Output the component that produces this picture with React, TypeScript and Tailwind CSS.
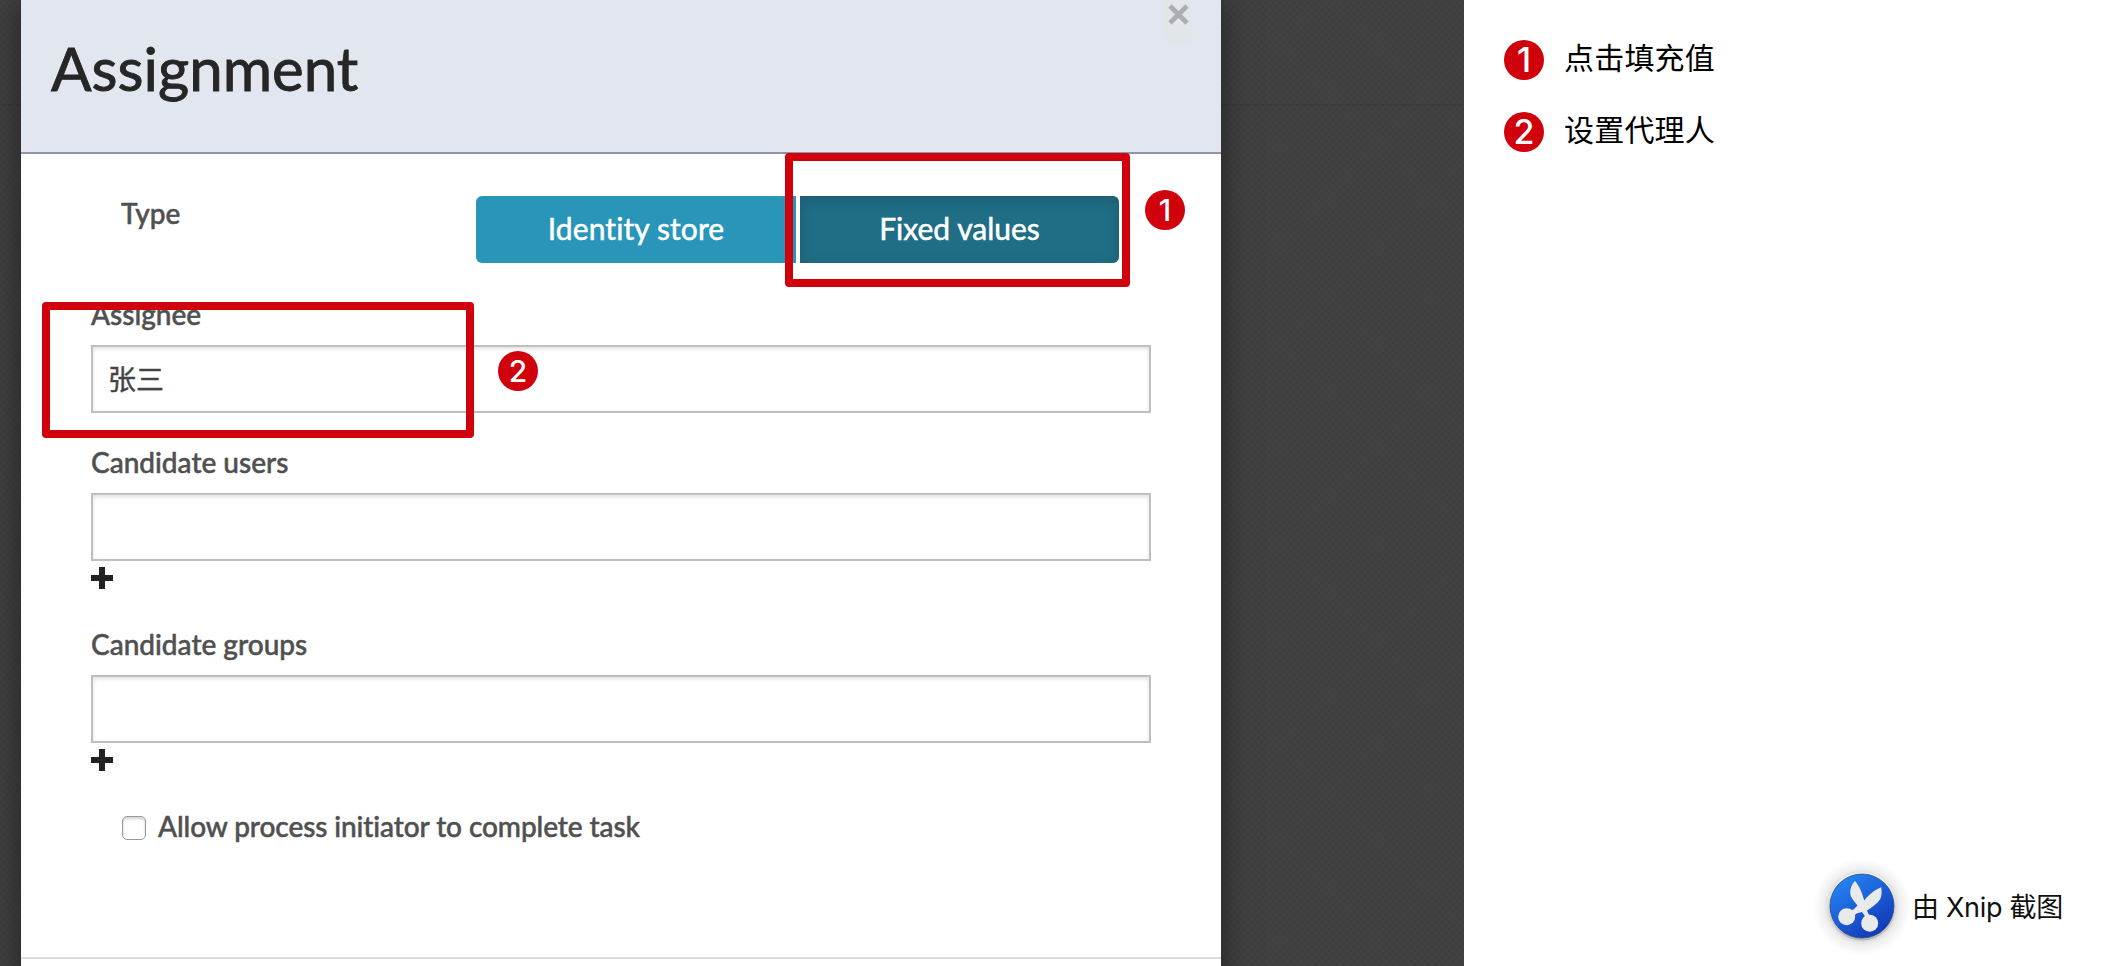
import type { ReactNode } from "react";

const LATO = "font-['Lato','Noto_Sans_CJK_SC',sans-serif]";
const LABEL = "text-[28px] font-medium leading-[34px] text-[#505050] [-webkit-text-stroke:0.5px_#505050]";

function Badge({ n, className = "" }: { n: number; className?: string }) {
  return (
    <span
      className={`flex size-10 shrink-0 items-center justify-center rounded-full bg-[#d0000d] font-['Inter',sans-serif] font-medium leading-none text-white ${className}`}
    >
      {n}
    </span>
  );
}

function Plus() {
  return (
    <svg className="mt-1.5 block size-[22px]" viewBox="0 0 22 22" fill="#222" shapeRendering="crispEdges">
      <path d="M8 0h6v8h8v6h-8v8H8v-8H0V8h8z" />
    </svg>
  );
}

function Field({ label, children, addable }: { label: string; children?: ReactNode; addable?: boolean }) {
  return (
    <div>
      <div className={`h-12 ${LABEL}`}>{label}</div>
      <div className="flex h-[68px] items-center border-2 border-[#bfbfbf] bg-white px-[15px] text-[28px] leading-none text-[#444] shadow-[inset_0_2px_4px_rgba(0,0,0,0.12)] [-webkit-text-stroke:0.4px_#444]">
        {children}
      </div>
      {addable && <Plus />}
    </div>
  );
}

function XnipIcon() {
  return (
    <svg className="block size-[100px] shrink-0" viewBox="0 0 100 100">
      <defs>
        <radialGradient id="halo">
          <stop offset="0.6" stopColor="#000" stopOpacity="0.2" />
          <stop offset="0.78" stopColor="#000" stopOpacity="0.06" />
          <stop offset="1" stopColor="#000" stopOpacity="0" />
        </radialGradient>
        <linearGradient id="rim" x1="0" y1="0" x2="0" y2="1">
          <stop offset="0" stopColor="#fafafa" />
          <stop offset="1" stopColor="#b4b6ba" />
        </linearGradient>
        <linearGradient id="disc" x1="0.15" y1="0.1" x2="0.75" y2="0.95">
          <stop offset="0" stopColor="#2583f2" />
          <stop offset="1" stopColor="#1239b8" />
        </linearGradient>
      </defs>
      <circle cx="50" cy="51" r="49" fill="url(#halo)" />
      <circle cx="50" cy="50.5" r="34" fill="url(#rim)" />
      <circle cx="50" cy="50" r="32" fill="url(#disc)" stroke="#2a4a86" strokeWidth="0.8" />
      <g fill="#e9eaec">
        <path d="M43 25C38.500 29 37 36.500 39.500 41.500C41 44.500 43.500 46.500 45.500 49.500L41.500 53.500L37 54.500L41.500 60.500L44.500 57.500L50 56L52.500 59.500L53 62.500L59.500 60.500L56.500 58L55 54.500C59.500 51.500 65 48 68 43.500C70 40 69.700 36 69.300 31.300C63 33.500 57 38.500 52.200 44.500C50.500 37.500 47 29.500 43 25Z" />
        <circle cx="34.700" cy="60.700" r="8.500" />
        <circle cx="57.700" cy="67.300" r="8.500" />
      </g>
    </svg>
  );
}

export default function App() {
  return (
    <div className={`relative flex h-[966px] w-[2104px] overflow-hidden bg-white [font-variant-ligatures:none] ${LATO}`}>
      <div className="w-[1464px] shrink-0 overflow-hidden bg-[#424242] bg-[repeating-linear-gradient(45deg,rgba(0,0,0,0.03)_0_2px,transparent_2px_5px),repeating-linear-gradient(-45deg,rgba(0,0,0,0.03)_0_2px,transparent_2px_5px),linear-gradient(transparent_104px,rgba(0,0,0,0.08)_104px,rgba(0,0,0,0.08)_106px,transparent_106px)] pl-[21px]">
        <div className="flex h-[1000px] w-[1200px] flex-col bg-white shadow-[0_0_30px_rgba(0,0,0,0.5)]">
          <header className="flex h-[154px] items-start justify-between border-b-2 border-[#8f96a9] bg-[#e2e6ee] pl-[30px] pr-7">
            <h1 className="mt-8 text-[60px] leading-[72px] text-[#262626] [-webkit-text-stroke:0.9px_#262626]">Assignment</h1>
            <div className="flex h-[42px] w-7 justify-center bg-[#e2e6e9] pr-px pt-1">
              <svg className="block size-[21px] shrink-0" viewBox="0 0 21 21" stroke="#aaaeb2" strokeWidth="4.6">
                <path d="M2 2L19 19M19 2L2 19" />
              </svg>
            </div>
          </header>
          <div className="flex h-[138px] items-start pl-[100px] pt-[42px]">
            <div className={`w-[355px] ${LABEL}`}>Type</div>
            <div className="flex gap-1 text-[30px] leading-[65px] text-white [-webkit-text-stroke:0.5px_#fff]">
              <div className="h-[67px] w-80 rounded-l-md bg-[#2895b9] text-center tracking-[0.1px]">Identity store</div>
              <div className="h-[67px] w-[319px] rounded-r-md bg-[#1f6e86] text-center shadow-[inset_0_4px_14px_rgba(0,0,0,0.16)]">
                Fixed values
              </div>
            </div>
          </div>
          <div className="flex h-[479px] flex-col px-[70px] pt-[5px]">
            <div className="h-[148px]"><Field label="Assignee">张三</Field></div>
            <div className="h-[182px]"><Field label="Candidate users" addable /></div>
            <Field label="Candidate groups" addable />
          </div>
          <div className="flex h-[188px] items-start border-b-2 border-[#dcdcdc] pl-[101px] pt-[38px]">
            <span className="mt-[7px] size-6 shrink-0 rounded-[5px] border border-[#9a9a9a] bg-white shadow-[inset_0_2px_3px_rgba(0,0,0,0.18)]" />
            <span className={`ml-3 whitespace-nowrap tracking-[-0.09px] ${LABEL}`}>
              Allow process initiator to complete task
            </span>
          </div>
        </div>
      </div>

      <aside className="flex flex-1 flex-col justify-between bg-white pl-10 pt-10 font-['Noto_Sans_CJK_SC',sans-serif] text-[30px] text-black">
        <div className="flex flex-col gap-8">
          <div className="flex h-10 items-center gap-5">
            <Badge n={1} className="text-[34px]" />
            <span className="-mt-2 leading-10 tracking-[0.2px]">点击填充值</span>
          </div>
          <div className="flex h-10 items-center gap-5">
            <Badge n={2} className="text-[34px]" />
            <span className="-mt-2 leading-10 tracking-[0.2px]">设置代理人</span>
          </div>
        </div>
        <div className="mb-2.5 mr-[41px] flex items-center justify-end">
          <XnipIcon />
          <span className="whitespace-nowrap pt-[3px] font-['Inter','Noto_Sans_CJK_SC',sans-serif] text-[27px] leading-10 tracking-[-0.28px] text-[#111]">由 Xnip 截图</span>
        </div>
      </aside>

      <div className="absolute left-[785px] top-[153px] h-[134px] w-[345px] rounded-[4px] border-8 border-[#d0000d]" />
      <Badge n={1} className="absolute left-[1145px] top-[190px] text-[30px]" />
      <div className="absolute left-[42px] top-[302px] h-[136px] w-[432px] rounded-[4px] border-8 border-[#d0000d]" />
      <Badge n={2} className="absolute left-[498px] top-[351px] text-[30px]" />
    </div>
  );
}
